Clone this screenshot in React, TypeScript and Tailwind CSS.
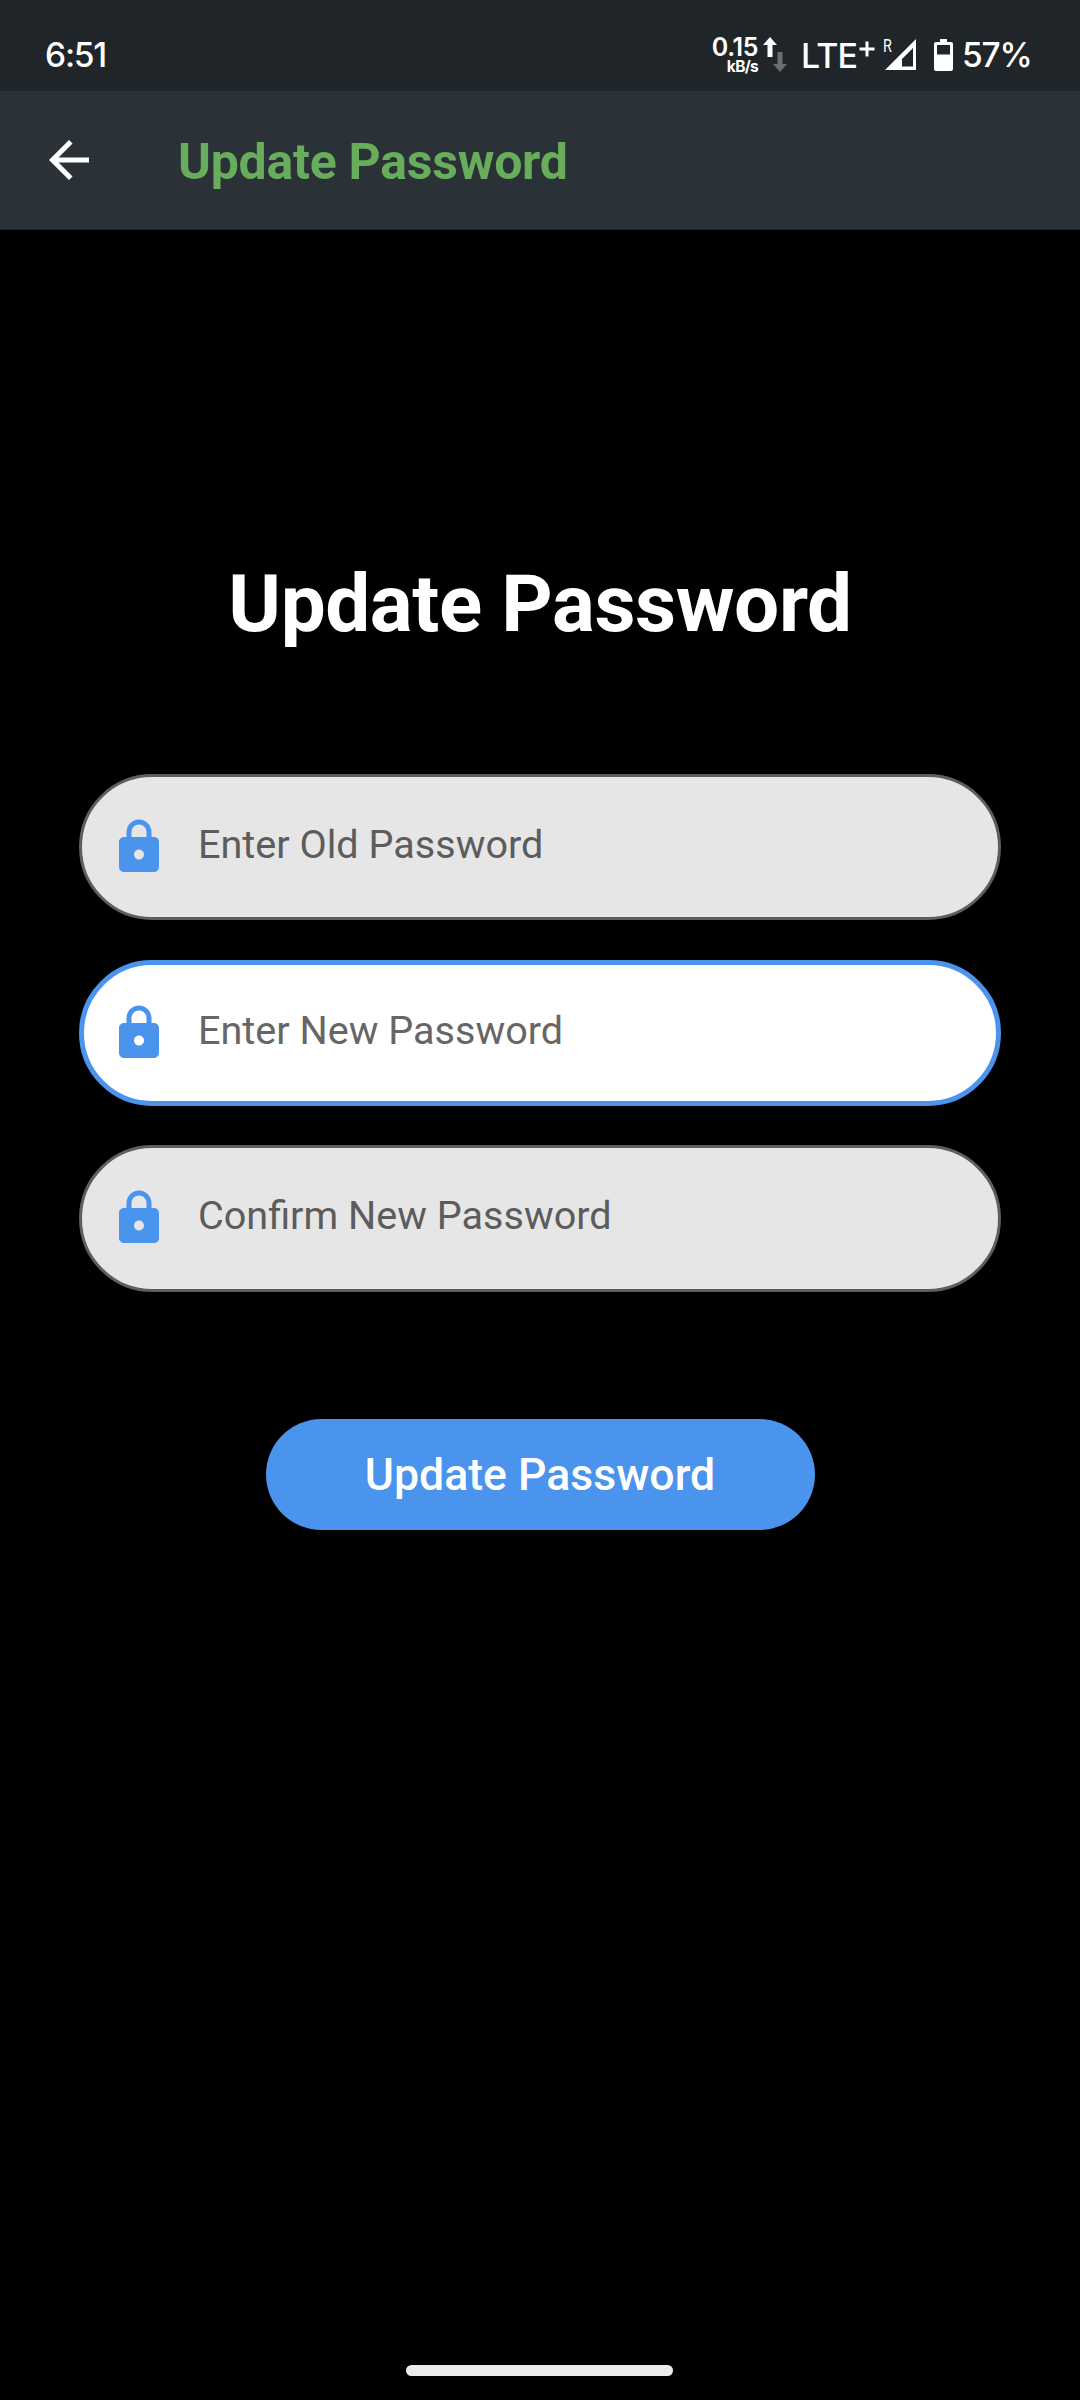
import React from "react";

function LockIcon() {
  return (
    <svg viewBox="0 0 24 24" className="size-[60px] shrink-0" fill="#4a94ee">
      <path d="M18 8h-1V6c0-2.76-2.24-5-5-5S7 3.24 7 6v2H6c-1.1 0-2 .9-2 2v10c0 1.1.9 2 2 2h12c1.1 0 2-.9 2-2V10c0-1.1-.9-2-2-2zm-6 9c-1.1 0-2-.9-2-2s.9-2 2-2 2 .9 2 2-.9 2-2 2zM9 8V6c0-1.66 1.34-3 3-3s3 1.34 3 3v2H9z" />
    </svg>
  );
}

function StatusBar() {
  return (
    <div className="flex h-[91px] items-start bg-[#202529] pl-[45px] pr-[48px] pt-[35px] font-['Inter',sans-serif] text-white">
      <span className="text-[33.5px] font-medium leading-[41px] tracking-[-1.2px]">6:51</span>
      <div className="ml-auto flex h-[40px]">
        <div className="flex w-[46px] flex-col items-end whitespace-nowrap">
          <span className="text-[25px] font-semibold leading-[25px] tracking-[-0.4px]">0.15</span>
          <span className="text-[15.5px] font-bold leading-[13px] tracking-[-0.7px]">kB/s</span>
        </div>
        <svg viewBox="0 0 24 35" className="ml-[5px] mt-[2px] h-[35px] w-[24px]">
          <path d="M7 0l7 8H9.500v12H4.500V8H0z" fill="#fff" />
          <path d="M17 35l7-8h-4.500V15h-5v12H10z" fill="#6b6e70" />
        </svg>
        <span className="ml-[14px] w-[57px] whitespace-nowrap text-[34px] font-medium leading-[41px] tracking-[-0.8px]">LTE</span>
        <svg viewBox="0 0 16 16" className="ml-[1px] mt-[6px] size-[16px]">
          <path d="M8 0.500v15M0.500 8h15" stroke="#fff" strokeWidth="3" />
        </svg>
        <div className="ml-[8px] flex h-[40px]">
          <span className="w-[2px] whitespace-nowrap pt-[1px] font-['Roboto',sans-serif] text-[18px] leading-[19px]">
            <span className="inline-block origin-left scale-x-[0.8]">R</span>
          </span>
          <svg viewBox="0 0 32 31" className="mt-[4px] h-[31px] w-[32px]">
            <path fillRule="evenodd" d="M31 0v31H0zM28 9L17 20v7.500h11z" fill="#fff" />
          </svg>
        </div>
        <svg viewBox="0 0 19 32" className="ml-[17px] mt-[4px] h-[32px] w-[19px]">
          <path fillRule="evenodd" d="M6 0h7v3h4a2 2 0 0 1 2 2v25a2 2 0 0 1-2 2H2a2 2 0 0 1-2-2V5a2 2 0 0 1 2-2h4zM3 6v9.500h13V6z" fill="#fff" />
        </svg>
        <span className="ml-[9px] w-[70px] whitespace-nowrap text-[33.5px] font-medium leading-[41px] tracking-[-1.2px]">57%</span>
      </div>
    </div>
  );
}

function AppBar() {
  return (
    <header className="flex h-[139px] items-center border-b border-[#1c2226] bg-[#2a3137] pl-[39px]">
      <svg viewBox="0 0 24 24" className="size-[60px]" fill="#fff">
        <path d="M20 11H7.830l5.590-5.590L12 4l-8 8 8 8 1.410-1.410L7.830 13H20v-2z" />
      </svg>
      <h1 className="ml-[79px] pt-[3px] text-[50px] font-bold leading-[60px] tracking-[-0.25px] text-[#68ad5c]">Update Password</h1>
    </header>
  );
}

function PasswordField({ label, focused = false }: { label: string; focused?: boolean }) {
  return (
    <label
      className={
        focused
          ? "flex h-[146.400px] items-center rounded-full border-[5px] border-[#4a94ee] bg-white pl-[25px] text-[#666666]"
          : "flex h-[146.400px] items-center rounded-full border-[3px] border-[#5e5e5e] bg-[#e6e6e6] pl-[27px] text-[#5c5c5c]"
      }
    >
      <LockIcon />
      <span className="ml-[29px] pb-[4px] text-[39.600px] leading-[46px]">{label}</span>
    </label>
  );
}

export default function App() {
  return (
    <div className="flex h-[2400px] w-[1080px] flex-col bg-black font-['Roboto',sans-serif]">
      <StatusBar />
      <AppBar />
      <main className="flex flex-1 flex-col items-center px-[79px] pt-[327px]">
        <h2 className="text-[80px] font-bold leading-[94px] tracking-[-0.4px] text-white">Update Password</h2>
        <form className="mt-[123px] flex w-full flex-col gap-[39.200px]">
          <PasswordField label="Enter Old Password" />
          <PasswordField label="Enter New Password" focused />
          <PasswordField label="Confirm New Password" />
        </form>
        <button className="mt-[127.400px] h-[111.500px] w-[549px] rounded-full bg-[#4a94ee] pt-[2px] text-[44.600px] font-medium text-white">
          Update Password
        </button>
      </main>
      <div className="mb-[24.500px] mr-px h-[10.500px] w-[267px] self-center rounded-full bg-[#ebebeb]" />
    </div>
  );
}
